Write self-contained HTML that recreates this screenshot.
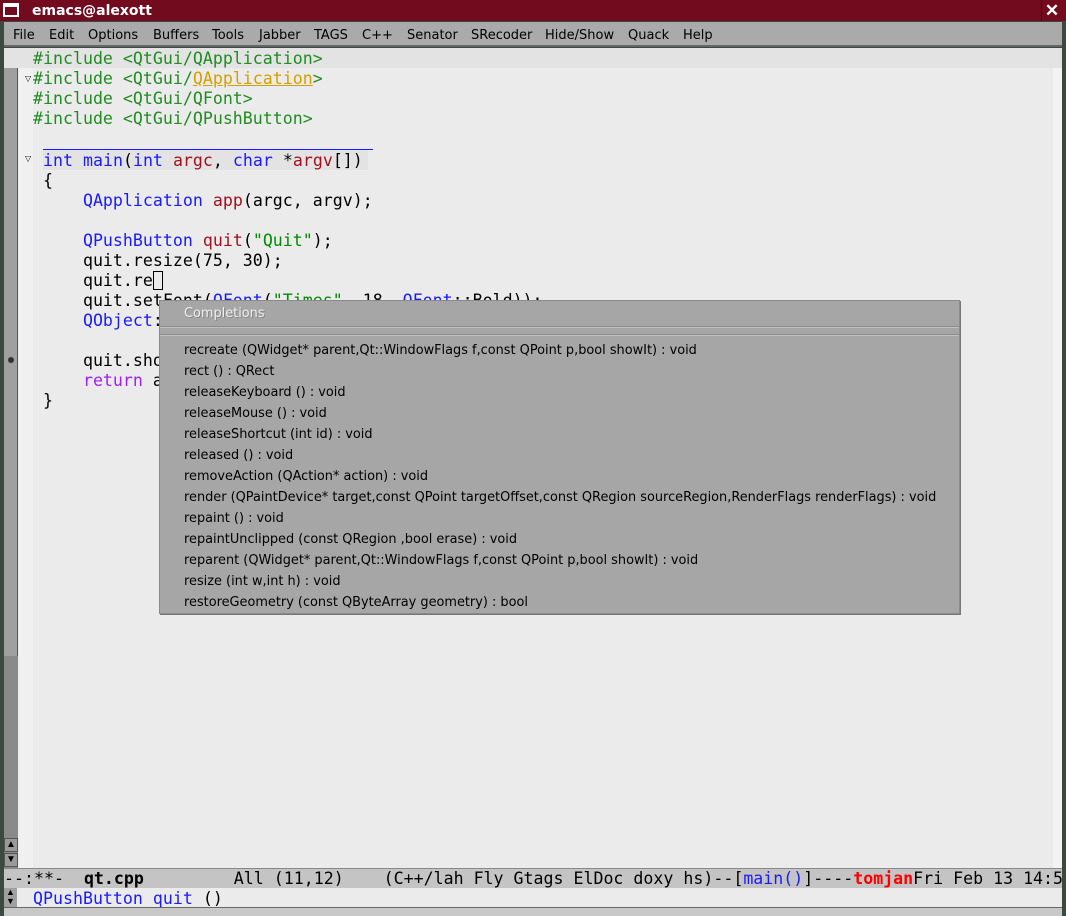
<!DOCTYPE html>
<html><head><meta charset="utf-8"><style>
*{margin:0;padding:0;box-sizing:border-box}
body{width:1066px;height:916px;overflow:hidden;background:#3a4a40;position:relative;font-family:"Liberation Sans","DejaVu Sans",sans-serif}
.abs{position:absolute}
#title{left:0;top:0;width:1066px;height:21px;background:#730b1e;color:#fff;font:bold 14px "DejaVu Sans",sans-serif}
#menu{left:4px;top:22px;width:1058px;height:25px;background:#aaa;border-bottom:2px solid #666;font:13px "DejaVu Sans",sans-serif;color:#000}
#menu span{position:absolute;top:6px}
#text{left:4px;top:48px;width:1058px;height:820px;background:#ebebeb}
.code{position:absolute;left:33px;font:16.6px/20px "DejaVu Sans Mono",monospace;white-space:pre;color:#000}
.g{color:#228b22}.b{color:#1a1aff}.r{color:#a0101e}.s{color:#008b00}.p{color:#a020f0}
#popup{left:159px;top:300px;width:801px;height:314px;background:#a6a6a6;border:1px solid #8a8a8a;box-shadow:1px 1px 0 #777}
#popup .it{position:absolute;left:24px;font:12.9px "DejaVu Sans",sans-serif;color:#000;white-space:nowrap}
</style></head><body>
<div id="title" class="abs">
 <div class="abs" style="left:3px;top:3px;width:16px;height:14px;border:2px solid #fff;border-top-width:4px"></div>
 <div class="abs" style="left:32px;top:3px">emacs@alexott</div>
 <div class="abs" style="left:1041px;top:0;width:21px;height:21px;border-left:1px solid #400;font:bold 17px sans-serif;text-align:center;line-height:21px">✕</div>
</div>
<div id="menu" class="abs">
<span style="left:9px">File</span><span style="left:45px">Edit</span><span style="left:84px">Options</span><span style="left:149px">Buffers</span><span style="left:208px">Tools</span><span style="left:255px">Jabber</span><span style="left:310px">TAGS</span><span style="left:358px">C++</span><span style="left:403px">Senator</span><span style="left:467px">SRecoder</span><span style="left:541px">Hide/Show</span><span style="left:624px">Quack</span><span style="left:679px">Help</span>
</div>
<div id="text" class="abs">
 <div class="abs" style="left:0;top:0;width:14px;height:820px;background:#a0a0a0;border-right:1px solid #555"></div>
 <div class="abs" style="left:0;top:608px;width:14px;height:212px;background:#8a8a8a"></div>
 <div class="abs" style="left:0;top:0;width:1058px;height:20px;background:#e3e3e3"></div>
 <div class="abs" style="left:15px;top:20px;width:14px;height:800px;background:#f0f0f0"></div>
 <div class="abs" style="left:1049px;top:20px;width:9px;height:800px;background:#f3f3f3"></div>
 <div class="abs" style="left:39px;top:101px;width:330px;height:1px;background:#1a1aff"></div>
 <div class="abs" style="left:39px;top:102px;width:325px;height:20px;background:#e3e3e3"></div>
 <div class="abs" style="left:21px;top:26px;font-size:8px">▽</div>
 <div class="abs" style="left:21px;top:106px;font-size:8px">▽</div>
 <div class="abs" style="left:4px;top:309px;width:6px;height:6px;border-radius:3px;background:#333"></div>
 <div class="abs" style="left:0;top:790px;width:14px;height:14px;background:#9a9a9a;font-size:10px;text-align:center;border:1px solid #555">▲</div>
 <div class="abs" style="left:0;top:805px;width:14px;height:14px;background:#9a9a9a;font-size:10px;text-align:center;border:1px solid #555">▼</div>
</div>
<div class="code" style="top:49px"><span class="g">#include &lt;QtGui/QApplication&gt;</span></div>
<div class="code" style="top:69px"><span class="g">#include &lt;QtGui/<span style="color:#d4a000;text-decoration:underline">QApplication</span>&gt;</span></div>
<div class="code" style="top:89px"><span class="g">#include &lt;QtGui/QFont&gt;</span></div>
<div class="code" style="top:109px"><span class="g">#include &lt;QtGui/QPushButton&gt;</span></div>
<div class="code" style="top:151px"> <span class="b">int</span> <span class="b">main</span>(<span class="b">int</span> <span class="r">argc</span>, <span class="b">char</span> *<span class="r">argv</span>[])</div>
<div class="code" style="top:171px"> {</div>
<div class="code" style="top:191px">     <span class="b">QApplication</span> <span class="r">app</span>(argc, argv);</div>
<div class="code" style="top:231px">     <span class="b">QPushButton</span> <span class="r">quit</span>(<span class="s">"Quit"</span>);</div>
<div class="code" style="top:251px">     quit.resize(75, 30);</div>
<div class="code" style="top:271px">     quit.re<span style="outline:1px solid #000;outline-offset:-1px"> </span></div>
<div class="code" style="top:291px">     quit.setFont(<span class="b">QFont</span>(<span class="s">"Times"</span>, 18, <span class="b">QFont</span>::Bold));</div>
<div class="code" style="top:311px">     <span class="b">QObject</span>::connect</div>
<div class="code" style="top:351px">     quit.show();</div>
<div class="code" style="top:371px">     <span class="p">return</span> app.exec();</div>
<div class="code" style="top:391px"> }</div>
<div id="popup" class="abs">
 <div class="abs" style="left:24px;top:5px;font:12.9px 'DejaVu Sans',sans-serif;color:#eee;text-shadow:1px 1px 0 #888">Completions</div>
 <div class="abs" style="left:0;top:25px;width:799px;height:1px;background:#8c8c8c"></div>
 <div class="abs" style="left:0;top:26px;width:799px;height:1px;background:#c0c0c0"></div>
 <div class="abs" style="left:0;top:33px;width:799px;height:1px;background:#8c8c8c"></div>
 <div class="abs" style="left:0;top:34px;width:799px;height:1px;background:#c0c0c0"></div>
 <div class="it" style="top:42px">recreate (QWidget* parent,Qt::WindowFlags f,const QPoint p,bool showIt) : void</div>
 <div class="it" style="top:63px">rect () : QRect</div>
 <div class="it" style="top:84px">releaseKeyboard () : void</div>
 <div class="it" style="top:105px">releaseMouse () : void</div>
 <div class="it" style="top:126px">releaseShortcut (int id) : void</div>
 <div class="it" style="top:147px">released () : void</div>
 <div class="it" style="top:168px">removeAction (QAction* action) : void</div>
 <div class="it" style="top:189px">render (QPaintDevice* target,const QPoint targetOffset,const QRegion sourceRegion,RenderFlags renderFlags) : void</div>
 <div class="it" style="top:210px">repaint () : void</div>
 <div class="it" style="top:231px">repaintUnclipped (const QRegion ,bool erase) : void</div>
 <div class="it" style="top:252px">reparent (QWidget* parent,Qt::WindowFlags f,const QPoint p,bool showIt) : void</div>
 <div class="it" style="top:273px">resize (int w,int h) : void</div>
 <div class="it" style="top:294px">restoreGeometry (const QByteArray geometry) : bool</div>
</div>
<div class="abs" style="left:4px;top:868px;width:1058px;height:20px;background:#c4c4c4;border-top:1px solid #888"></div>
<div class="code" style="left:4px;top:869px;font-size:16.6px"><span>--:**-  <b>qt.cpp</b>         All (11,12)    (C++/lah Fly Gtags ElDoc doxy hs)--[<span class="b">main()</span>]----<b style="color:#f00">tomjan</b>Fri Feb 13 14:5</div>
<div class="abs" style="left:4px;top:888px;width:1058px;height:19px;background:#ebebeb"></div>
<div class="abs" style="left:4px;top:888px;width:13px;height:19px;background:#a0a0a0;font-size:9px;line-height:9px;text-align:center">▲<br>▼</div>
<div class="code" style="top:889px;font-size:16.6px;line-height:20px"><span class="b">QPushButton quit</span> ()</div>
<div class="abs" style="left:4px;top:907px;width:1058px;height:9px;background:#c8c8c8;border-top:1px solid #666"></div>
</body></html>
